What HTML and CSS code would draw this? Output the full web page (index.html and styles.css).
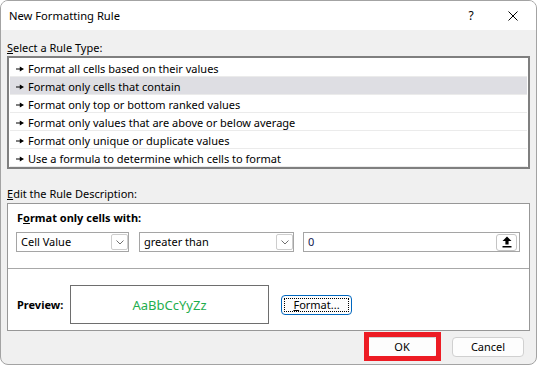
FILE: index.html
```html
<!DOCTYPE html>
<html>
<head>
<meta charset="utf-8">
<title>New Formatting Rule</title>
<link rel="stylesheet" href="styles.css">
</head>
<body>
<div class="window">
  <div class="titlebar">
    <span class="title">New Formatting Rule</span>
    <span class="help">?</span>
    <span class="close"><svg width="10" height="10" viewBox="0 0 10 10"><path d="M0.5 0.5L9.5 9.5M9.5 0.5L0.5 9.5" stroke="#000" stroke-width="1" fill="none"/></svg></span>
  </div>
  <div class="content">
    <div class="label"><u>S</u>elect a Rule Type:</div>
    <ul class="listbox">
      <li class="item"><svg class="arrow" width="8" height="6" viewBox="0 0 8 6"><path d="M0 2.4h4.5v1.2H0z M3.8 0.6L8 3L3.8 5.4z"/></svg>Format all cells based on their values</li>
      <li class="item selected"><svg class="arrow" width="8" height="6" viewBox="0 0 8 6"><path d="M0 2.4h4.5v1.2H0z M3.8 0.6L8 3L3.8 5.4z"/></svg>Format only cells that contain</li>
      <li class="item"><svg class="arrow" width="8" height="6" viewBox="0 0 8 6"><path d="M0 2.4h4.5v1.2H0z M3.8 0.6L8 3L3.8 5.4z"/></svg>Format only top or bottom ranked values</li>
      <li class="item"><svg class="arrow" width="8" height="6" viewBox="0 0 8 6"><path d="M0 2.4h4.5v1.2H0z M3.8 0.6L8 3L3.8 5.4z"/></svg>Format only values that are above or below average</li>
      <li class="item"><svg class="arrow" width="8" height="6" viewBox="0 0 8 6"><path d="M0 2.4h4.5v1.2H0z M3.8 0.6L8 3L3.8 5.4z"/></svg>Format only unique or duplicate values</li>
      <li class="item"><svg class="arrow" width="8" height="6" viewBox="0 0 8 6"><path d="M0 2.4h4.5v1.2H0z M3.8 0.6L8 3L3.8 5.4z"/></svg>Use a formula to determine which cells to format</li>
    </ul>
    <div class="label label-edit"><u>E</u>dit the Rule Description:</div>
    <div class="panel">
      <div class="criteria">
        <div class="bold-label">F<u>o</u>rmat only cells with:</div>
        <div class="controls">
          <div class="combo combo-field"><span>Cell Value</span><span class="drop"><svg width="8" height="5" viewBox="0 0 8 5"><path d="M0.5 0.5L4 4L7.5 0.5" stroke="#707070" stroke-width="1" fill="none"/></svg></span></div>
          <div class="combo combo-op"><span>greater than</span><span class="drop"><svg width="8" height="5" viewBox="0 0 8 5"><path d="M0.5 0.5L4 4L7.5 0.5" stroke="#707070" stroke-width="1" fill="none"/></svg></span></div>
          <div class="input"><span class="value">0</span><span class="ref-btn"><svg width="10" height="12" viewBox="0 0 10 12"><path d="M5 0.5L9.5 5H6.6V8.5H3.4V5H0.5Z M0.5 10H9.5V11.5H0.5Z" fill="#000"/></svg></span></div>
        </div>
      </div>
      <div class="preview-row">
        <div class="bold-label preview-label">Preview:</div>
        <div class="preview-box">AaBbCcYyZz</div>
        <button class="btn btn-format"><span class="focus"><u>F</u>ormat...</span></button>
      </div>
    </div>
    <div class="actions">
      <div class="ok-wrap"><button class="btn btn-ok">OK</button><span class="highlight"></span></div>
      <button class="btn btn-cancel">Cancel</button>
    </div>
  </div>
</div>
</body>
</html>
```

FILE: styles.css
```css
* { box-sizing: border-box; }

body {
  margin: 0;
  background: #ffffff;
  font-family: "Noto Sans", "Open Sans", sans-serif;
  font-size: 11px;
  color: #000;
}

.window {
  width: 537px;
  height: 365px;
  border: 1px solid #a3a3a3;
  border-radius: 8px;
  overflow: hidden;
  display: flex;
  flex-direction: column;
  background: #f0f0f0;
}

.titlebar {
  height: 29px;
  background: #ffffff;
  display: flex;
  align-items: center;
  padding-left: 8px;
  flex-shrink: 0;
}

.title {
  font-size: 11.2px;
  line-height: 16px;
}

.help {
  margin-left: auto;
  width: 20px;
  margin-right: 9px;
  text-align: center;
  font-size: 12px;
  line-height: 16px;
}

.close {
  width: 46px;
  display: flex;
  justify-content: center;
  align-items: center;
}

.close svg { display: block; }

.content {
  flex: 1;
  padding: 10px 6px 0;
  display: flex;
  flex-direction: column;
}

.label {
  line-height: 16px;
  height: 16px;
  margin-bottom: 0;
}

.label-edit {
  margin-top: 17px;
  margin-bottom: 1px;
}

.listbox {
  list-style: none;
  margin: 0;
  padding: 1px 1px 0 1px;
  background: #fff;
  border: 2px solid #7f7f7f;
}

.item {
  height: 18px;
  display: flex;
  align-items: center;
  padding-left: 6px;
  padding-top: 3px;
  border-bottom: 1px solid #ebebeb;
  line-height: 14px;
  white-space: nowrap;
}

.item.selected {
  background: #dedee3;
}

.arrow {
  display: block;
  margin-right: 4px;
  margin-top: -1px;
  flex-shrink: 0;
}

.panel {
  background: #fff;
  border: 1px solid #979797;
}

.criteria {
  height: 65px;
  padding: 6px 8px 0;
  border-bottom: 1px solid #a8a8a8;
}

.bold-label {
  font-weight: bold;
  line-height: 16px;
  padding-left: 1px;
}

.controls {
  display: flex;
  margin-top: 6px;
  padding-right: 1px;
}

.combo, .input {
  height: 20px;
  border: 1px solid #a5a5a5;
  background: #fff;
  display: flex;
  align-items: center;
  padding-left: 4px;
  line-height: 16px;
}

.combo-field {
  width: 113px;
  margin-right: 10px;
}

.combo-op {
  width: 155px;
  margin-right: 9px;
}

.input {
  flex: 1;
}

.drop {
  margin-left: auto;
  width: 17px;
  height: 16px;
  border: 1px solid #cdcdcd;
  border-radius: 2px;
  display: flex;
  align-items: center;
  justify-content: center;
}

.drop svg { display: block; }

.value {
  color: #102050;
}

.ref-btn {
  margin-left: auto;
  margin-right: 2px;
  width: 21px;
  height: 17px;
  border: 1px solid #c4c4c4;
  border-radius: 3px;
  background: #fff;
  display: flex;
  align-items: center;
  justify-content: center;
}

.ref-btn svg { display: block; }

.preview-row {
  height: 61px;
  display: flex;
  align-items: center;
  padding: 10px 8px 0;
}

.preview-label {
  width: 54px;
}

.preview-box {
  width: 199px;
  height: 39px;
  border: 1px solid #6e6e6e;
  display: flex;
  align-items: center;
  justify-content: center;
  color: #1fae4e;
  font-size: 13px;
}

.btn {
  font-family: "Noto Sans", "Open Sans", sans-serif;
  font-size: 11px;
  color: #000;
  background: #fdfdfd;
  border: 1px solid #d0d0d0;
  border-radius: 4px;
  height: 20px;
  padding: 0;
  line-height: 16px;
}

.btn-format {
  margin-left: 12px;
  width: 71px;
  border-color: #0067c0;
  padding: 2px;
  display: flex;
}

.focus {
  flex: 1;
  border: 1px dotted #000;
  display: flex;
  align-items: center;
  justify-content: center;
  line-height: 12px;
}

.actions {
  display: flex;
  justify-content: flex-end;
  margin-top: 6px;
  padding-right: 6px;
  gap: 14px;
}

.ok-wrap {
  position: relative;
  display: flex;
}

.btn-ok, .btn-cancel {
  width: 72px;
}

.highlight {
  position: absolute;
  left: -2px;
  right: -3px;
  top: -5px;
  bottom: -4px;
  border: 5px solid #ed1c24;
}
```
